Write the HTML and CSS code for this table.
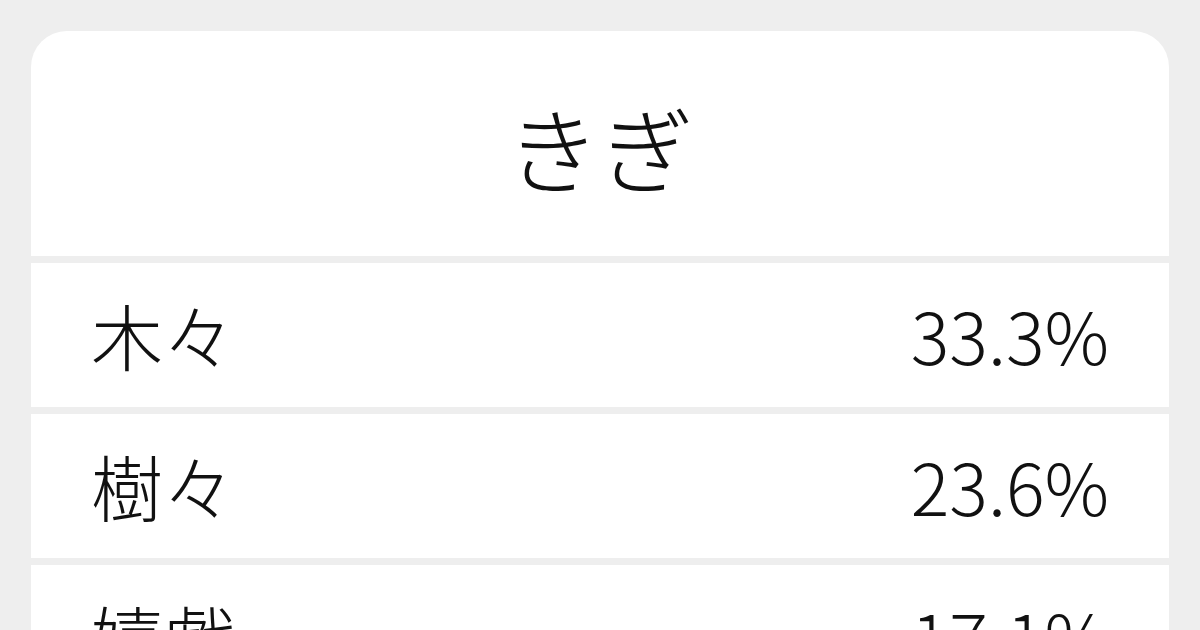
FILE: index.html
```html
<!DOCTYPE html>
<html lang="ja">
<head>
<meta charset="utf-8">
<link rel="stylesheet" href="styles.css">
</head>
<body>
<div class="card">
  <div class="header">きぎ</div>
  <div class="row"><span class="word">木々</span><span class="pct">33.3%</span></div>
  <div class="row"><span class="word">樹々</span><span class="pct">23.6%</span></div>
  <div class="row"><span class="word">嬉戯</span><span class="pct">17.1%</span></div>
</div>
</body>
</html>
```
FILE: styles.css
```css
html, body {
  margin: 0;
  padding: 0;
  background: #eeeeee;
}
body {
  width: 1200px;
  height: 630px;
  overflow: hidden;
  padding: 31px 31px 0 31px;
  box-sizing: border-box;
  font-family: "Noto Sans CJK JP", "Noto Sans", sans-serif;
  color: #111111;
}
.card {
  background: #eeeeee;
  border-radius: 36px 36px 0 0;
  overflow: hidden;
  display: flex;
  flex-direction: column;
  gap: 7px;
}
.header {
  background: #ffffff;
  height: 225px;
  display: flex;
  align-items: center;
  justify-content: center;
  font-size: 94px;
  font-weight: 300;
  padding-top: 4px;
  box-sizing: border-box;
}
.row {
  background: #ffffff;
  height: 144px;
  flex: none;
  display: flex;
  align-items: center;
  justify-content: space-between;
  padding: 0 60px 4px 60px;
  box-sizing: border-box;
  font-size: 72px;
  font-weight: 300;
}
```
